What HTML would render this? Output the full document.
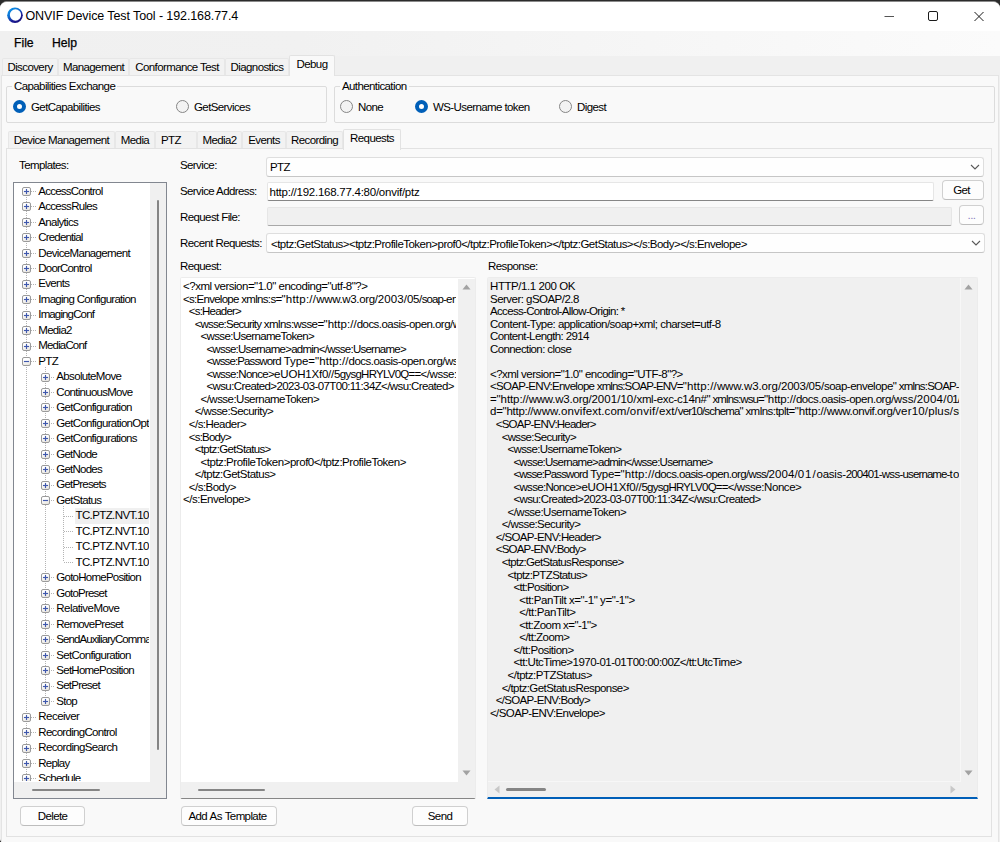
<!DOCTYPE html>
<html lang="en"><head><meta charset="utf-8"><title>ONVIF Device Test Tool - 192.168.77.4</title>
<style>
*{box-sizing:border-box;margin:0;padding:0}
html,body{width:1000px;height:842px;overflow:hidden}
body{position:relative;background:#f0f0f0;font-family:"Liberation Sans",sans-serif;font-size:11.5px;letter-spacing:-0.6px;color:#000;line-height:13px}
.a{position:absolute}
i{position:absolute;display:block;font-style:normal}
.t{position:absolute;white-space:nowrap;line-height:14px;height:14px}
/* window frame */
#frame{left:0;top:0;width:1000px;height:842px;background:#2b2b2b}
#win{left:0;top:1px;width:1000px;height:841px;background:#f0f0f0;border-radius:7px 7px 0 3px;overflow:hidden;border-top:1px solid #8a8a8a}
#title{left:0;top:0;width:1000px;height:29px;background:#fff}
#title .tt{left:25.5px;top:5.5px;font-size:12.5px;line-height:16px;height:16px;letter-spacing:-0.1px;color:#000}
#menu{left:0;top:29px;width:1000px;height:25px;background:linear-gradient(90deg,#f0f0f0 0%,#f1f1f1 30%,#fbfbfb 100%)}
#menu .t{top:4px;font-size:12.2px;line-height:16px;height:16px;letter-spacing:0;-webkit-text-stroke:0.25px #000}
/* tabs */
.tab{position:absolute;background:#f2f2f2;border:1px solid #e7e7e7;border-bottom:none;white-space:nowrap;text-align:center;line-height:16px;border-radius:2px 2px 0 0}
.tab.on{background:#f9f9f9;border-color:#e2e2e2;z-index:3}
.page{position:absolute;background:#f9f9f9;border:1px solid #e4e4e4}
.gb{position:absolute;border:1px solid #dcdcdc;border-radius:2px}
.gb .cap{position:absolute;top:-8px;left:5px;padding:0 2px;background:#f9f9f9;line-height:14px;white-space:nowrap}
.rb{position:absolute;width:13px;height:13px;border-radius:50%;border:1px solid #868686;background:#f3f3f3}
.rb.on{border:4px solid #005fb8;background:#fff}
.lbl{position:absolute;white-space:nowrap;line-height:14px}
/* form */
.combo{position:absolute;background:#fefefe;border:1px solid #dedede;border-bottom-color:#c6c6c6;border-radius:3px;white-space:nowrap;overflow:hidden}
.combo .v{position:absolute;left:4px;top:3px;line-height:14px}
.edit{position:absolute;background:#fff;border:1px solid #e6e6e6;border-bottom:1px solid #868686;border-radius:2px;white-space:nowrap;overflow:hidden}
.edit.dis{background:#f0f0f0;border-color:#e6e6e6;border-bottom-color:#a8a8a8}
.btn{position:absolute;background:#fdfdfd;border:1px solid #d0d0d0;border-bottom-color:#bdbdbd;border-radius:4px;text-align:center;white-space:nowrap}
/* tree */
#tree{left:13px;top:182px;width:154px;height:617px;border:1px solid #828790;background:#fff;overflow:hidden}
#treec{left:0;top:0;width:135px;height:598px;overflow:hidden}
.tn{position:absolute;white-space:nowrap;line-height:15.46px;height:15.46px;padding:0 1px}
.tn.sel{background:#f0f0f0;width:100px}
.vd{width:1px;background:repeating-linear-gradient(180deg,#b4b4b4 0 1px,transparent 1px 2px)}
.hd{height:1px;background:repeating-linear-gradient(90deg,#b4b4b4 0 1px,transparent 1px 2px)}
.bx{width:9px;height:9px;border:1px solid #9a9a9a;border-radius:2px;background:linear-gradient(160deg,#fff 30%,#e6e3dc 100%)}
.bx:before{content:"";position:absolute;left:1px;top:3px;width:5px;height:1px;background:#3f58ad;box-shadow:0 0 1px rgba(63,88,173,.8)}
.bx.pl:after{content:"";position:absolute;left:3px;top:1px;width:1px;height:5px;background:#3f58ad;box-shadow:0 0 1px rgba(63,88,173,.8)}
/* text boxes */
.ln{white-space:pre;height:12.56px;line-height:12.56px}
.sb{position:absolute;background:#f0f0f0}
.thumb{position:absolute;background:#858585;border-radius:1px}

</style></head>
<body>
<div class="a" id="frame"></div>
<div class="a" id="win">
 <div class="a" id="title">
  <svg class="a" style="left:5px;top:3px" width="22" height="22" viewBox="5 5 22 22"><defs><linearGradient id="ig" x1="0.15" y1="0.1" x2="0.75" y2="0.95"><stop offset="0" stop-color="#0a93ea"/><stop offset="0.35" stop-color="#0f6fd0"/><stop offset="0.7" stop-color="#1a1a96"/><stop offset="1" stop-color="#15107c"/></linearGradient></defs><circle cx="15" cy="15.2" r="7.8" fill="url(#ig)"/><circle cx="15.5" cy="15" r="5.65" fill="#fff"/></svg>
  <span class="t tt">ONVIF Device Test Tool - 192.168.77.4</span>
  <svg class="a" style="left:880px;top:3.5px" width="110" height="22" viewBox="0 0 110 22" fill="none" stroke="#1a1a1a" stroke-width="1"><path d="M4.5 10.5h9.5" stroke="#555"/><rect x="48.5" y="5.5" width="9" height="9" rx="1.5"/><path d="M94.5 6l9 9M103.5 6l-9 9"/></svg>
 </div>
 <div class="a" id="menu"><span class="t" style="left:14px">File</span><span class="t" style="left:52px">Help</span></div>
</div>

<!-- main tabs -->
<div class="tab" style="left:2px;top:58px;width:56px;height:18px">Discovery</div>
<div class="tab" style="left:58px;top:58px;width:71px;height:18px">Management</div>
<div class="tab" style="left:129px;top:58px;width:96px;height:18px">Conformance Test</div>
<div class="tab" style="left:225px;top:58px;width:64px;height:18px">Diagnostics</div>
<div class="tab on" style="left:289px;top:55px;width:46px;height:21px;line-height:17px">Debug</div>
<div class="page" style="left:1px;top:75px;width:998px;height:770px"></div>

<!-- group boxes -->
<div class="gb" style="left:6px;top:86px;width:321px;height:37px"><span class="cap">Capabilities Exchange</span></div>
<i class="rb on" style="left:13px;top:100px"></i><span class="lbl" style="left:31px;top:100px">GetCapabilities</span>
<i class="rb" style="left:176px;top:100px"></i><span class="lbl" style="left:194px;top:100px">GetServices</span>
<div class="gb" style="left:334px;top:86px;width:661px;height:37px"><span class="cap">Authentication</span></div>
<i class="rb" style="left:340px;top:100px"></i><span class="lbl" style="left:358px;top:100px">None</span>
<i class="rb on" style="left:415px;top:100px"></i><span class="lbl" style="left:433px;top:100px">WS-Username token</span>
<i class="rb" style="left:559px;top:100px"></i><span class="lbl" style="left:577px;top:100px">Digest</span>

<!-- inner tabs -->
<div class="tab" style="left:8px;top:131px;width:107px;height:18px">Device Management</div>
<div class="tab" style="left:115px;top:131px;width:40px;height:18px">Media</div>
<div class="tab" style="left:155px;top:131px;width:42px;height:18px;text-align:left;padding-left:5px">PTZ</div>
<div class="tab" style="left:197px;top:131px;width:45px;height:18px">Media2</div>
<div class="tab" style="left:242px;top:131px;width:44px;height:18px">Events</div>
<div class="tab" style="left:286px;top:131px;width:57px;height:18px">Recording</div>
<div class="tab on" style="left:343px;top:129px;width:58px;height:21px;line-height:16px">Requests</div>
<div class="page" style="left:6px;top:148px;width:986px;height:689px;border-color:#e2e2e2"></div>

<!-- left column -->
<span class="lbl" style="left:19px;top:158px">Templates:</span>
<div class="a" id="tree">
 <div class="a" id="treec">
<i class="vd" style="left:12.0px;top:8.4px;height:597.5px"></i>
<i class="vd" style="left:30.5px;top:183.5px;height:335.1px"></i>
<i class="vd" style="left:49.0px;top:322.6px;height:56.8px"></i>
<i class="hd" style="left:12.5px;top:7.9px;width:9.8px"></i>
<i class="bx pl" style="left:8.0px;top:3.9px"></i>
<span class="tn" style="left:23.3px;top:0.70px;letter-spacing:-0.765px">AccessControl</span>
<i class="hd" style="left:12.5px;top:23.4px;width:9.8px"></i>
<i class="bx pl" style="left:8.0px;top:19.4px"></i>
<span class="tn" style="left:23.3px;top:16.16px;letter-spacing:-0.706px">AccessRules</span>
<i class="hd" style="left:12.5px;top:38.8px;width:9.8px"></i>
<i class="bx pl" style="left:8.0px;top:34.8px"></i>
<span class="tn" style="left:23.3px;top:31.62px;letter-spacing:-0.703px">Analytics</span>
<i class="hd" style="left:12.5px;top:54.3px;width:9.8px"></i>
<i class="bx pl" style="left:8.0px;top:50.3px"></i>
<span class="tn" style="left:23.3px;top:47.08px;letter-spacing:-0.822px">Credential</span>
<i class="hd" style="left:12.5px;top:69.8px;width:9.8px"></i>
<i class="bx pl" style="left:8.0px;top:65.8px"></i>
<span class="tn" style="left:23.3px;top:62.54px;letter-spacing:-0.661px">DeviceManagement</span>
<i class="hd" style="left:12.5px;top:85.2px;width:9.8px"></i>
<i class="bx pl" style="left:8.0px;top:81.2px"></i>
<span class="tn" style="left:23.3px;top:78.00px;letter-spacing:-0.800px">DoorControl</span>
<i class="hd" style="left:12.5px;top:100.7px;width:9.8px"></i>
<i class="bx pl" style="left:8.0px;top:96.7px"></i>
<span class="tn" style="left:23.3px;top:93.46px;letter-spacing:-0.695px">Events</span>
<i class="hd" style="left:12.5px;top:116.1px;width:9.8px"></i>
<i class="bx pl" style="left:8.0px;top:112.1px"></i>
<span class="tn" style="left:23.3px;top:108.92px;letter-spacing:-0.715px">Imaging Configuration</span>
<i class="hd" style="left:12.5px;top:131.6px;width:9.8px"></i>
<i class="bx pl" style="left:8.0px;top:127.6px"></i>
<span class="tn" style="left:23.3px;top:124.38px;letter-spacing:-0.865px">ImagingConf</span>
<i class="hd" style="left:12.5px;top:147.1px;width:9.8px"></i>
<i class="bx pl" style="left:8.0px;top:143.1px"></i>
<span class="tn" style="left:23.3px;top:139.84px;letter-spacing:-0.703px">Media2</span>
<i class="hd" style="left:12.5px;top:162.5px;width:9.8px"></i>
<i class="bx pl" style="left:8.0px;top:158.5px"></i>
<span class="tn" style="left:23.3px;top:155.30px;letter-spacing:-0.847px">MediaConf</span>
<i class="hd" style="left:12.5px;top:178.0px;width:9.8px"></i>
<i class="bx mi" style="left:8.0px;top:174.0px"></i>
<span class="tn" style="left:23.3px;top:170.76px;letter-spacing:-0.678px">PTZ</span>
<i class="hd" style="left:31.0px;top:193.5px;width:9.3px"></i>
<i class="bx pl" style="left:26.5px;top:189.5px"></i>
<span class="tn" style="left:41.3px;top:186.22px;letter-spacing:-0.656px">AbsoluteMove</span>
<i class="hd" style="left:31.0px;top:208.9px;width:9.3px"></i>
<i class="bx pl" style="left:26.5px;top:204.9px"></i>
<span class="tn" style="left:41.3px;top:201.68px;letter-spacing:-0.722px">ContinuousMove</span>
<i class="hd" style="left:31.0px;top:224.4px;width:9.3px"></i>
<i class="bx pl" style="left:26.5px;top:220.4px"></i>
<span class="tn" style="left:41.3px;top:217.14px;letter-spacing:-0.716px">GetConfiguration</span>
<i class="hd" style="left:31.0px;top:239.8px;width:9.3px"></i>
<i class="bx pl" style="left:26.5px;top:235.8px"></i>
<span class="tn" style="left:41.3px;top:232.60px;letter-spacing:-0.683px">GetConfigurationOptions</span>
<i class="hd" style="left:31.0px;top:255.3px;width:9.3px"></i>
<i class="bx pl" style="left:26.5px;top:251.3px"></i>
<span class="tn" style="left:41.3px;top:248.06px;letter-spacing:-0.718px">GetConfigurations</span>
<i class="hd" style="left:31.0px;top:270.8px;width:9.3px"></i>
<i class="bx pl" style="left:26.5px;top:266.8px"></i>
<span class="tn" style="left:41.3px;top:263.52px;letter-spacing:-0.762px">GetNode</span>
<i class="hd" style="left:31.0px;top:286.2px;width:9.3px"></i>
<i class="bx pl" style="left:26.5px;top:282.2px"></i>
<span class="tn" style="left:41.3px;top:278.98px;letter-spacing:-0.760px">GetNodes</span>
<i class="hd" style="left:31.0px;top:301.7px;width:9.3px"></i>
<i class="bx pl" style="left:26.5px;top:297.7px"></i>
<span class="tn" style="left:41.3px;top:294.44px;letter-spacing:-0.803px">GetPresets</span>
<i class="hd" style="left:31.0px;top:317.1px;width:9.3px"></i>
<i class="bx mi" style="left:26.5px;top:313.1px"></i>
<span class="tn" style="left:41.3px;top:309.90px;letter-spacing:-0.682px">GetStatus</span>
<i class="hd" style="left:49.5px;top:332.6px;width:10.0px"></i>
<span class="tn sel" style="left:60.5px;top:325.36px;letter-spacing:-0.604px">TC.PTZ.NVT.10</span>
<i class="hd" style="left:49.5px;top:348.0px;width:10.0px"></i>
<span class="tn" style="left:60.5px;top:340.82px;letter-spacing:-0.604px">TC.PTZ.NVT.10</span>
<i class="hd" style="left:49.5px;top:363.5px;width:10.0px"></i>
<span class="tn" style="left:60.5px;top:356.28px;letter-spacing:-0.604px">TC.PTZ.NVT.10</span>
<i class="hd" style="left:49.5px;top:379.0px;width:10.0px"></i>
<span class="tn" style="left:60.5px;top:371.74px;letter-spacing:-0.604px">TC.PTZ.NVT.10</span>
<i class="hd" style="left:31.0px;top:394.4px;width:9.3px"></i>
<i class="bx pl" style="left:26.5px;top:390.4px"></i>
<span class="tn" style="left:41.3px;top:387.20px;letter-spacing:-0.752px">GotoHomePosition</span>
<i class="hd" style="left:31.0px;top:409.9px;width:9.3px"></i>
<i class="bx pl" style="left:26.5px;top:405.9px"></i>
<span class="tn" style="left:41.3px;top:402.66px;letter-spacing:-0.787px">GotoPreset</span>
<i class="hd" style="left:31.0px;top:425.4px;width:9.3px"></i>
<i class="bx pl" style="left:26.5px;top:421.4px"></i>
<span class="tn" style="left:41.3px;top:418.12px;letter-spacing:-0.556px">RelativeMove</span>
<i class="hd" style="left:31.0px;top:440.8px;width:9.3px"></i>
<i class="bx pl" style="left:26.5px;top:436.8px"></i>
<span class="tn" style="left:41.3px;top:433.58px;letter-spacing:-0.780px">RemovePreset</span>
<i class="hd" style="left:31.0px;top:456.3px;width:9.3px"></i>
<i class="bx pl" style="left:26.5px;top:452.3px"></i>
<span class="tn" style="left:41.3px;top:449.04px;letter-spacing:-0.900px">SendAuxiliaryCommand</span>
<i class="hd" style="left:31.0px;top:471.7px;width:9.3px"></i>
<i class="bx pl" style="left:26.5px;top:467.7px"></i>
<span class="tn" style="left:41.3px;top:464.50px;letter-spacing:-0.704px">SetConfiguration</span>
<i class="hd" style="left:31.0px;top:487.2px;width:9.3px"></i>
<i class="bx pl" style="left:26.5px;top:483.2px"></i>
<span class="tn" style="left:41.3px;top:479.96px;letter-spacing:-0.744px">SetHomePosition</span>
<i class="hd" style="left:31.0px;top:502.7px;width:9.3px"></i>
<i class="bx pl" style="left:26.5px;top:498.7px"></i>
<span class="tn" style="left:41.3px;top:495.42px;letter-spacing:-0.767px">SetPreset</span>
<i class="hd" style="left:31.0px;top:518.1px;width:9.3px"></i>
<i class="bx pl" style="left:26.5px;top:514.1px"></i>
<span class="tn" style="left:41.3px;top:510.88px;letter-spacing:-0.743px">Stop</span>
<i class="hd" style="left:12.5px;top:533.6px;width:9.8px"></i>
<i class="bx pl" style="left:8.0px;top:529.6px"></i>
<span class="tn" style="left:23.3px;top:526.34px;letter-spacing:-0.536px">Receiver</span>
<i class="hd" style="left:12.5px;top:549.0px;width:9.8px"></i>
<i class="bx pl" style="left:8.0px;top:545.0px"></i>
<span class="tn" style="left:23.3px;top:541.80px;letter-spacing:-0.700px">RecordingControl</span>
<i class="hd" style="left:12.5px;top:564.5px;width:9.8px"></i>
<i class="bx pl" style="left:8.0px;top:560.5px"></i>
<span class="tn" style="left:23.3px;top:557.26px;letter-spacing:-0.657px">RecordingSearch</span>
<i class="hd" style="left:12.5px;top:580.0px;width:9.8px"></i>
<i class="bx pl" style="left:8.0px;top:576.0px"></i>
<span class="tn" style="left:23.3px;top:572.72px;letter-spacing:-0.785px">Replay</span>
<i class="hd" style="left:12.5px;top:595.4px;width:9.8px"></i>
<i class="bx pl" style="left:8.0px;top:591.4px"></i>
<span class="tn" style="left:23.3px;top:588.18px;letter-spacing:-0.734px">Schedule</span>
 </div>
 <div class="sb" style="left:136px;top:0;width:16px;height:615px"></div>
 <div class="sb" style="left:0;top:599px;width:152px;height:16px"></div>
 <i class="thumb" style="left:143px;top:17px;width:2px;height:550px"></i>
 <i class="thumb" style="left:18px;top:606px;width:68px;height:2px"></i>
</div>
<div class="btn" style="left:20px;top:806px;width:65px;height:20px;line-height:18px">Delete</div>

<!-- form -->
<span class="lbl" style="left:180px;top:158px">Service:</span>
<div class="combo" style="left:266px;top:157px;width:718px;height:20px"><span class="v" style="left:3px;top:2px">PTZ</span>
 <svg class="a" style="right:3px;top:6px" width="10" height="7" viewBox="0 0 10 7" fill="none" stroke="#5a5a5a" stroke-width="1.1"><path d="M1 1l4 4 4-4"/></svg></div>
<span class="lbl" style="left:180px;top:184px">Service Address:</span>
<div class="edit" style="left:267px;top:182px;width:667px;height:19px"><span class="lbl" style="left:1.5px;top:2px;letter-spacing:-0.25px">http://192.168.77.4:80/onvif/ptz</span></div>
<div class="btn" style="left:942px;top:180px;width:42px;height:20px;line-height:18px;padding-right:3px;letter-spacing:-0.7px">Get</div>
<span class="lbl" style="left:180px;top:210px">Request File:</span>
<div class="edit dis" style="left:267px;top:207px;width:685px;height:19px"></div>
<div class="btn" style="left:959px;top:205px;width:25px;height:20px;line-height:18px;color:#8a7fc0">...</div>
<span class="lbl" style="left:180px;top:236px">Recent Requests:</span>
<div class="combo" style="left:266px;top:233px;width:719px;height:20px"><span class="v" style="left:4px;letter-spacing:-0.52px">&lt;tptz:GetStatus&gt;&lt;tptz:ProfileToken&gt;prof0&lt;/tptz:ProfileToken&gt;&lt;/tptz:GetStatus&gt;&lt;/s:Body&gt;&lt;/s:Envelope&gt;</span>
 <svg class="a" style="right:3px;top:6px" width="10" height="7" viewBox="0 0 10 7" fill="none" stroke="#5a5a5a" stroke-width="1.1"><path d="M1 1l4 4 4-4"/></svg></div>

<span class="lbl" style="left:180px;top:259px">Request:</span>
<div class="a" id="reqbox" style="left:180px;top:277px;width:296px;height:522px;background:#fff;border:1px solid #ececec;border-bottom:1px solid #868686;border-radius:2px;overflow:hidden">
 <div class="a" style="left:2px;top:2px;width:273px;height:501px;overflow:hidden">
<div class="ln" style="padding-left:0.0px;letter-spacing:-0.490px">&lt;?xml version=&quot;1.0&quot; encoding=&quot;utf-8&quot;?&gt;</div>
<div class="ln" style="padding-left:0.0px"><span style="letter-spacing:-0.720px">&lt;s:Envelope</span><span style="letter-spacing:-0.677px"> xmlns:s=</span><span style="letter-spacing:0.230px">&quot;http://</span><span style="letter-spacing:-0.335px">www.w3.org/</span><span style="letter-spacing:0.104px">2003/</span><span style="letter-spacing:-0.433px">05/</span><span style="letter-spacing:-0.900px">soap-</span><span style="letter-spacing:-0.5px">envelope&quot;&gt;</span></div>
<div class="ln" style="padding-left:5.8px;letter-spacing:-0.796px">&lt;s:Header&gt;</div>
<div class="ln" style="padding-left:11.7px"><span style="letter-spacing:-0.797px">&lt;wsse:Security</span><span style="letter-spacing:-0.579px"> xmlns:wsse=</span><span style="letter-spacing:0.030px">&quot;http://</span><span style="letter-spacing:-0.538px">docs.oasis-open.org/</span><span style="letter-spacing:-0.5px">wss/2004/01/oasis-200401-wss-wssecurity-secext-1.0.xsd&quot;&gt;</span></div>
<div class="ln" style="padding-left:17.5px;letter-spacing:-0.646px">&lt;wsse:UsernameToken&gt;</div>
<div class="ln" style="padding-left:23.4px;letter-spacing:-0.741px">&lt;wsse:Username&gt;admin&lt;/wsse:Username&gt;</div>
<div class="ln" style="padding-left:23.4px"><span style="letter-spacing:-0.879px">&lt;wsse:Password</span><span style="letter-spacing:-0.057px"> Type=</span><span style="letter-spacing:0.080px">&quot;http://</span><span style="letter-spacing:-0.513px">docs.oasis-open.org/</span><span style="letter-spacing:-0.5px">wss/2004/01/oasis-200401-wss-username-token-profile-1.0#PasswordDigest&quot;&gt;</span></div>
<div class="ln" style="padding-left:23.4px"><span style="letter-spacing:-0.698px">&lt;wsse:Nonce&gt;</span><span style="letter-spacing:-0.200px">eUOH1Xf0//</span><span style="letter-spacing:-0.739px">5gysgHRYLV0Q==</span><span style="letter-spacing:-0.436px">&lt;/wsse:Nonce&gt;</span></div>
<div class="ln" style="padding-left:23.4px;letter-spacing:-0.608px">&lt;wsu:Created&gt;2023-03-07T00:11:34Z&lt;/wsu:Created&gt;</div>
<div class="ln" style="padding-left:17.5px;letter-spacing:-0.529px">&lt;/wsse:UsernameToken&gt;</div>
<div class="ln" style="padding-left:11.7px;letter-spacing:-0.561px">&lt;/wsse:Security&gt;</div>
<div class="ln" style="padding-left:5.8px;letter-spacing:-0.541px">&lt;/s:Header&gt;</div>
<div class="ln" style="padding-left:5.8px;letter-spacing:-0.805px">&lt;s:Body&gt;</div>
<div class="ln" style="padding-left:11.7px;letter-spacing:-0.645px">&lt;tptz:GetStatus&gt;</div>
<div class="ln" style="padding-left:17.5px;letter-spacing:-0.474px">&lt;tptz:ProfileToken&gt;prof0&lt;/tptz:ProfileToken&gt;</div>
<div class="ln" style="padding-left:11.7px;letter-spacing:-0.506px">&lt;/tptz:GetStatus&gt;</div>
<div class="ln" style="padding-left:5.8px;letter-spacing:-0.516px">&lt;/s:Body&gt;</div>
<div class="ln" style="padding-left:0.0px;letter-spacing:-0.487px">&lt;/s:Envelope&gt;</div>
 </div>
 <div class="sb" style="left:277px;top:1px;width:17px;height:519px"></div>
 <div class="sb" style="left:0;top:504px;width:294px;height:16px"></div>
 <svg class="a" style="left:281px;top:6px" width="9" height="6" viewBox="0 0 9 6"><path d="M0.5 5.5L4.5 0.5l4 5z" fill="#a2a2a2"/></svg>
 <svg class="a" style="left:281px;top:492px" width="9" height="6" viewBox="0 0 9 6"><path d="M0.5 0.5L4.5 5.5l4-5z" fill="#a2a2a2"/></svg>
 <i class="thumb" style="left:17px;top:511px;width:67px;height:2px"></i>
</div>
<div class="btn" style="left:181px;top:806px;width:96px;height:20px;line-height:18px;padding-right:3px;word-spacing:0.5px">Add As Template</div>
<div class="btn" style="left:412px;top:806px;width:56px;height:20px;line-height:18px">Send</div>

<span class="lbl" style="left:488px;top:259px">Response:</span>
<div class="a" id="respbox" style="left:487px;top:277px;width:491px;height:522px;background:#f0f0f0;border:1px solid #ececec;border-bottom:2px solid #005fb8;border-radius:2px 2px 0 0;overflow:hidden">
 <div class="a" style="left:2px;top:2px;width:468.5px;height:501px;overflow:hidden">
<div class="ln" style="padding-left:0.0px;letter-spacing:-0.427px">HTTP/1.1 200 OK</div>
<div class="ln" style="padding-left:0.0px;letter-spacing:-0.529px">Server: gSOAP/2.8</div>
<div class="ln" style="padding-left:0.0px;letter-spacing:-0.669px">Access-Control-Allow-Origin: *</div>
<div class="ln" style="padding-left:0.0px;letter-spacing:-0.538px">Content-Type: application/soap+xml; charset=utf-8</div>
<div class="ln" style="padding-left:0.0px;letter-spacing:-0.623px">Content-Length: 2914</div>
<div class="ln" style="padding-left:0.0px;letter-spacing:-0.601px">Connection: close</div>
<div class="ln">&nbsp;</div>
<div class="ln" style="padding-left:0.0px;letter-spacing:-0.520px">&lt;?xml version=&quot;1.0&quot; encoding=&quot;UTF-8&quot;?&gt;</div>
<div class="ln" style="padding-left:0.0px"><span style="letter-spacing:-0.699px">&lt;SOAP-ENV:Envelope </span><span style="letter-spacing:-0.900px">xmlns:SOAP-ENV=</span><span style="letter-spacing:0.168px">&quot;http://</span><span style="letter-spacing:-0.099px">www.w3.org/</span><span style="letter-spacing:-0.233px">2003/05/</span><span style="letter-spacing:-0.502px">soap-envelope&quot;</span><span style="letter-spacing:-0.810px"> xmlns:SOAP-</span><span style="letter-spacing:-0.5px">ENC=&quot;http://www.w3.org/2003/05/soap-encoding&quot;</span></div>
<div class="ln" style="padding-left:0.0px"><span style="letter-spacing:-0.098px">=&quot;http://</span><span style="letter-spacing:-0.226px">www.w3.org/</span><span style="letter-spacing:0.042px">2001/10/</span><span style="letter-spacing:-0.369px">xml-exc-c14n#&quot;</span><span style="letter-spacing:-0.900px"> xmlns:wsu=</span><span style="letter-spacing:-0.107px">&quot;http://</span><span style="letter-spacing:-0.448px">docs.oasis-open.org/</span><span style="letter-spacing:0.000px">wss/</span><span style="letter-spacing:0.244px">2004/</span><span style="letter-spacing:-0.900px">01</span><span style="letter-spacing:-0.5px">/oasis-200401-wss-wssecurity-utility-1.0.xsd&quot;</span></div>
<div class="ln" style="padding-left:0.0px"><span style="letter-spacing:-0.267px">d=&quot;http://</span><span style="letter-spacing:0.074px">www.onvifext.com/</span><span style="letter-spacing:0.300px">onvif/</span><span style="letter-spacing:0.038px">ext/</span><span style="letter-spacing:-0.900px">ver10/</span><span style="letter-spacing:-0.851px">schema&quot;</span><span style="letter-spacing:-0.540px"> xmlns:tplt=</span><span style="letter-spacing:-0.120px">&quot;http://</span><span style="letter-spacing:-0.449px">www.onvif.org/</span><span style="letter-spacing:0.172px">ver10/</span><span style="letter-spacing:0.141px">plus/</span><span style="letter-spacing:-0.5px">schema&quot;</span></div>
<div class="ln" style="padding-left:5.8px;letter-spacing:-0.789px">&lt;SOAP-ENV:Header&gt;</div>
<div class="ln" style="padding-left:11.7px;letter-spacing:-0.672px">&lt;wsse:Security&gt;</div>
<div class="ln" style="padding-left:17.5px;letter-spacing:-0.636px">&lt;wsse:UsernameToken&gt;</div>
<div class="ln" style="padding-left:23.4px;letter-spacing:-0.752px">&lt;wsse:Username&gt;admin&lt;/wsse:Username&gt;</div>
<div class="ln" style="padding-left:23.4px"><span style="letter-spacing:-0.900px">&lt;wsse:Password</span><span style="letter-spacing:-0.257px"> Type=</span><span style="letter-spacing:0.155px">&quot;http://</span><span style="letter-spacing:-0.638px">docs.oasis-open.org/</span><span style="letter-spacing:-0.775px">wss/</span><span style="letter-spacing:0.104px">2004/</span><span style="letter-spacing:0.900px">01/</span><span style="letter-spacing:-0.231px">oasis-</span><span style="letter-spacing:-0.900px">200401-</span><span style="letter-spacing:-0.685px">wss-</span><span style="letter-spacing:-0.900px">username-</span><span style="letter-spacing:0.353px">to</span><span style="letter-spacing:-0.5px">ken-profile-1.0#PasswordDigest&quot;&gt;</span></div>
<div class="ln" style="padding-left:23.4px"><span style="letter-spacing:-0.673px">&lt;wsse:Nonce&gt;</span><span style="letter-spacing:-0.200px">eUOH1Xf0//</span><span style="letter-spacing:-0.739px">5gysgHRYLV0Q==</span><span style="letter-spacing:-0.436px">&lt;/wsse:Nonce&gt;</span></div>
<div class="ln" style="padding-left:23.4px;letter-spacing:-0.612px">&lt;wsu:Created&gt;2023-03-07T00:11:34Z&lt;/wsu:Created&gt;</div>
<div class="ln" style="padding-left:17.5px;letter-spacing:-0.529px">&lt;/wsse:UsernameToken&gt;</div>
<div class="ln" style="padding-left:11.7px;letter-spacing:-0.555px">&lt;/wsse:Security&gt;</div>
<div class="ln" style="padding-left:5.8px;letter-spacing:-0.639px">&lt;/SOAP-ENV:Header&gt;</div>
<div class="ln" style="padding-left:5.8px;letter-spacing:-0.806px">&lt;SOAP-ENV:Body&gt;</div>
<div class="ln" style="padding-left:11.7px;letter-spacing:-0.675px">&lt;tptz:GetStatusResponse&gt;</div>
<div class="ln" style="padding-left:17.5px;letter-spacing:-0.615px">&lt;tptz:PTZStatus&gt;</div>
<div class="ln" style="padding-left:23.4px;letter-spacing:-0.672px">&lt;tt:Position&gt;</div>
<div class="ln" style="padding-left:29.2px;letter-spacing:-0.421px">&lt;tt:PanTilt x=&quot;-1&quot; y=&quot;-1&quot;&gt;</div>
<div class="ln" style="padding-left:29.2px;letter-spacing:-0.402px">&lt;/tt:PanTilt&gt;</div>
<div class="ln" style="padding-left:29.2px;letter-spacing:-0.557px">&lt;tt:Zoom x=&quot;-1&quot;&gt;</div>
<div class="ln" style="padding-left:29.2px;letter-spacing:-0.526px">&lt;/tt:Zoom&gt;</div>
<div class="ln" style="padding-left:23.4px;letter-spacing:-0.488px">&lt;/tt:Position&gt;</div>
<div class="ln" style="padding-left:23.4px;letter-spacing:-0.518px">&lt;tt:UtcTime&gt;1970-01-01T00:00:00Z&lt;/tt:UtcTime&gt;</div>
<div class="ln" style="padding-left:17.5px;letter-spacing:-0.485px">&lt;/tptz:PTZStatus&gt;</div>
<div class="ln" style="padding-left:11.7px;letter-spacing:-0.567px">&lt;/tptz:GetStatusResponse&gt;</div>
<div class="ln" style="padding-left:5.8px;letter-spacing:-0.681px">&lt;/SOAP-ENV:Body&gt;</div>
<div class="ln" style="padding-left:0.0px;letter-spacing:-0.599px">&lt;/SOAP-ENV:Envelope&gt;</div>
 </div>
 <i style="left:472px;top:0;width:1px;height:504px;background:#f7f7f7"></i>
 <i style="left:0;top:503px;width:473px;height:1px;background:#f7f7f7"></i>
 <svg class="a" style="left:476px;top:6px" width="9" height="6" viewBox="0 0 9 6"><path d="M0.5 5.5L4.5 0.5l4 5z" fill="#a2a2a2"/></svg>
 <svg class="a" style="left:476px;top:492px" width="9" height="6" viewBox="0 0 9 6"><path d="M0.5 0.5L4.5 5.5l4-5z" fill="#a2a2a2"/></svg>
 <svg class="a" style="left:6px;top:507px" width="6" height="9" viewBox="0 0 6 9"><path d="M5.5 0.5L0.5 4.5l5 4z" fill="#c8c8c8"/></svg>
 <svg class="a" style="left:462px;top:507px" width="6" height="9" viewBox="0 0 6 9"><path d="M0.5 0.5L5.5 4.5l-5 4z" fill="#c8c8c8"/></svg>
 <i class="thumb" style="left:18px;top:510px;width:40px;height:3px;border-radius:2px"></i>
</div>

</body></html>
